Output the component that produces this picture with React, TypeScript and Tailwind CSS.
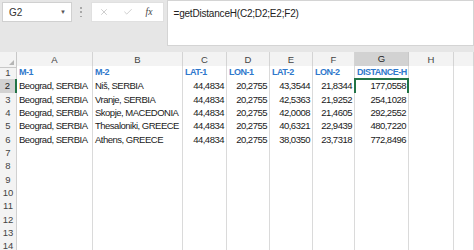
import { X, Check } from 'lucide-react'

const cols = ['A', 'B', 'C', 'D', 'E', 'F', 'G', 'H', '']
const gridCols = 'grid grid-cols-[17px_76px_90px_44px_43px_43px_42px_54px_45px_1fr]'

const heads = ['M-1', 'M-2', 'LAT-1', 'LON-1', 'LAT-2', 'LON-2', 'DISTANCE-H']

const rows = [
  ['Beograd, SERBIA', 'Niš, SERBIA', '44,4834', '20,2755', '43,3544', '21,8344', '177,0558'],
  ['Beograd, SERBIA', 'Vranje, SERBIA', '44,4834', '20,2755', '42,5363', '21,9252', '254,1028'],
  ['Beograd, SERBIA', 'Skopje, MACEDONIA', '44,4834', '20,2755', '42,0008', '21,4605', '292,2552'],
  ['Beograd, SERBIA', 'Thesaloniki, GREECE', '44,4834', '20,2755', '40,6321', '22,9439', '480,7220'],
  ['Beograd, SERBIA', 'Athens, GREECE', '44,4834', '20,2755', '38,0350', '23,7318', '772,8496'],
]

export default function App() {
  return (
    <div className="w-[474px] h-[250px] overflow-hidden bg-[#e6e6e6] font-['Liberation_Sans',Arial,sans-serif] text-[9.5px] tracking-[-0.5px] text-[#1a1a1a]">
      {/* Formula bar */}
      <div className="flex h-[52px] items-start tracking-normal">
        <div className="mt-[2px] ml-[2px] flex h-[20px] w-[70px] items-center justify-between border border-[#d0d0d0] bg-white pl-[6px] pr-[5px] text-[10px] text-[#333]">
          <span>G2</span>
          <span className="text-[6px] text-[#555]">▼</span>
        </div>
        <div className="mt-[7px] ml-[8px] flex h-[10px] flex-col justify-between">
          <span className="block h-[1.5px] w-[1.5px] bg-[#a8a8a8]" />
          <span className="block h-[1.5px] w-[1.5px] bg-[#a8a8a8]" />
          <span className="block h-[1.5px] w-[1.5px] bg-[#a8a8a8]" />
        </div>
        <div className="mt-[2px] ml-[9px] flex h-[20px] w-[73px] items-center border border-[#e0e0e0] bg-white pl-[7px] text-[#b0b0b0]">
          <X size={10} strokeWidth={1.5} />
          <Check size={10} strokeWidth={1.5} className="ml-[14px]" />
          <span className="ml-[13px] font-['Liberation_Serif',serif] text-[9.5px] italic text-[#444]">fx</span>
        </div>
        <div className="ml-[3px] h-[46px] flex-1 border border-[#d4d4d4] bg-white pl-[6px] pt-[5px] text-[10px] tracking-[-0.2px] text-[#222]">
          =getDistanceH(C2;D2;E2;F2)
        </div>
      </div>

      {/* Column headers */}
      <div className={`${gridCols} h-[14px] bg-[#f3f3f3] text-[9.5px] text-[#444] tracking-normal`}>
        <div className="relative border-r border-b border-[#c8c8c8]">
          <span className="absolute right-[2px] bottom-[2px] h-0 w-0 border-l-[5px] border-t-[5px] border-l-transparent border-t-transparent border-b-0 border-r-[5px] border-r-[#b5b5b5]" />
        </div>
        {cols.map((c, i) => (
          <div
            key={i}
            className={
              c === 'G'
                ? 'flex items-center justify-center border-r border-b-2 border-r-[#c8c8c8] border-b-[#217346] bg-[#d2d2d2] text-[#222]'
                : 'flex items-center justify-center border-r border-b border-[#d4d4d4]'
            }
          >
            {c}
          </div>
        ))}
      </div>

      {/* Rows */}
      {Array.from({ length: 14 }).map((_, r) => {
        const n = r + 1
        const data = n === 1 ? heads : rows[n - 2]
        return (
          <div key={n} className={`${gridCols} h-[13.33px]`}>
            <div
              className={
                n === 2
                  ? 'flex items-center justify-center border-r-2 border-b border-r-[#217346] border-b-[#c8c8c8] bg-[#d2d2d2] text-[#222] tracking-normal'
                  : 'flex items-center justify-center border-r border-b border-[#d0d0d0] bg-[#f3f3f3] text-[#444] tracking-normal'
              }
            >
              {n}
            </div>
            {cols.map((_, ci) => {
              const v = data ? data[ci] : undefined
              const isHead = n === 1
              const isNum = !isHead && ci >= 2
              const sel = n === 2 && ci === 6
              return (
                <div
                  key={ci}
                  className={`relative flex items-center whitespace-nowrap border-r border-b border-[#dadada] bg-white px-[2px] ${
                    isNum ? 'justify-end' : 'justify-start'
                  } ${isHead ? 'text-[9px] font-bold text-[#2f78cc]' : ''}`}
                >
                  {v}
                  {sel && (
                    <>
                      <span className="absolute -top-[1px] -left-[1px] -right-[1px] -bottom-[1px] border-2 border-[#217346]" />
                      <span className="absolute -right-[3px] -bottom-[3px] h-[4px] w-[4px] border border-white bg-[#217346]" />
                    </>
                  )}
                </div>
              )
            })}
          </div>
        )
      })}
    </div>
  )
}
